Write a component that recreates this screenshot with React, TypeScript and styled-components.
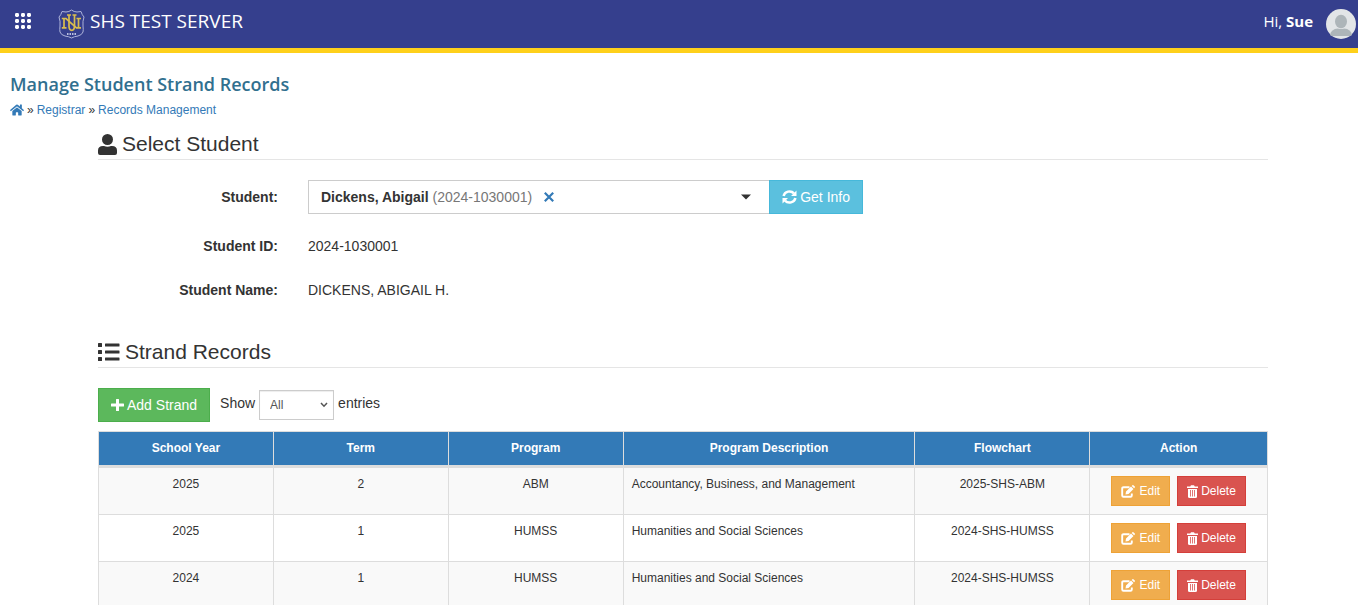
import React from "react";
import styled, { createGlobalStyle } from "styled-components";
import { FaHome } from "react-icons/fa";

const GlobalStyle = createGlobalStyle`
  *, *::before, *::after { box-sizing: border-box; }
  body {
    margin: 0;
    background: #fff;
    color: #333;
    font: 14px/20px "Liberation Sans", Arial, sans-serif;
  }
  button, select { font: inherit; margin: 0; }
  svg { flex: none; }
`;

const TopBar = styled.header`
  display: flex;
  align-items: center;
  height: 53px;
  padding: 0 2px 6px 14px;
  background: #353f8d;
  border-bottom: 5px solid #fed01b;
  color: #fff;
  font-family: "Open Sans", "Noto Sans", sans-serif;
`;

const MenuButton = styled.button`
  display: flex;
  padding: 0;
  border: 0;
  background: none;
  color: inherit;
  cursor: pointer;
`;

const Brand = styled.a`
  display: flex;
  align-items: center;
  gap: 5px;
  margin-left: 26px;
  color: inherit;
  font-size: 19px;
  line-height: 24px;
  text-decoration: none;

  svg { margin-top: 5px; }
`;

const UserMenu = styled.div`
  display: flex;
  align-items: center;
  gap: 13px;
  margin-left: auto;
  font-size: 15px;

  svg { margin-top: 5px; }
`;

const Page = styled.main`
  padding: 18px 2px 24px 10px;
`;

const PageTitle = styled.h1`
  margin: 0;
  color: #31708f;
  font: 600 18px/26px "Open Sans", "Noto Sans", sans-serif;
`;

const Breadcrumb = styled.nav`
  display: flex;
  align-items: center;
  gap: 3px;
  margin-top: 3px;
  font-size: 12px;

  a {
    display: flex;
    color: #337ab7;
    text-decoration: none;
  }
`;

const Container = styled.div`
  max-width: 1170px;
  margin: 0 auto;
`;

const SectionTitle = styled.h2`
  display: flex;
  align-items: center;
  gap: 5px;
  margin: 0 0 20px;
  padding: 10px 0 1px;
  border-bottom: 1px solid #e5e5e5;
  font-size: 21px;
  font-weight: 400;
  line-height: 28px;
`;

const FormRow = styled.div<{ $after: number }>`
  display: grid;
  grid-template-columns: 180px 1fr;
  column-gap: 30px;
  align-items: center;
  margin-bottom: ${(p) => p.$after}px;
`;

const FieldLabel = styled.label`
  font-weight: 700;
  text-align: right;
`;

const InputGroup = styled.div`
  display: flex;
  max-width: 555px;
`;

const StudentPicker = styled.div`
  display: flex;
  flex: 1;
  align-items: center;
  border: 1px solid #ccc;
  border-right: 0;
  padding: 0 18px 0 12px;
`;

const PickerButton = styled.button`
  padding: 0;
  border: 0;
  background: none;
  color: #777;
  cursor: pointer;

  strong { color: #333; }
`;

const IconButton = styled.button<{ $color: string; $push?: boolean }>`
  display: flex;
  margin-left: ${(p) => (p.$push ? "auto" : "12px")};
  padding: 0;
  border: 0;
  background: none;
  color: ${(p) => p.$color};
  cursor: pointer;
`;

const tones = {
  info: ["#5bc0de", "#46b8da"],
  success: ["#5cb85c", "#4cae4c"],
  warning: ["#f0ad4e", "#eea236"],
  danger: ["#d9534f", "#d43f3a"],
};

const Button = styled.button<{ $tone: keyof typeof tones; $small?: boolean }>`
  display: inline-flex;
  align-items: center;
  gap: 3px;
  height: ${(p) => (p.$small ? 30 : 34)}px;
  padding: 0 ${(p) => (p.$small ? 9 : 12)}px;
  border: 1px solid ${(p) => tones[p.$tone][1]};
  background: ${(p) => tones[p.$tone][0]};
  color: #fff;
  font-size: ${(p) => (p.$small ? 12 : 14)}px;
  white-space: nowrap;
  cursor: pointer;
`;

const Toolbar = styled.div`
  display: flex;
  align-items: center;
  gap: 10px;
  margin-bottom: 9px;
`;

const LengthLabel = styled.label`
  display: flex;
  align-items: center;
  gap: 4px;

  span { padding-bottom: 4px; }
`;

const SelectWrap = styled.div`
  position: relative;
  width: 75px;

  svg {
    position: absolute;
    top: 12px;
    right: 6px;
    pointer-events: none;
  }
`;

const LengthSelect = styled.select`
  display: block;
  width: 100%;
  height: 30px;
  padding: 0 10px;
  appearance: none;
  border: 1px solid #ccc;
  border-radius: 0;
  background: #fff;
  box-shadow: inset 0 1px 1px rgba(0, 0, 0, 0.075);
  color: #555;
  font-size: 12px;
`;

const RecordsTable = styled.table`
  width: 100%;
  table-layout: fixed;
  border-collapse: collapse;
  font-size: 12px;
  line-height: 17px;

  th, td {
    border: 1px solid #ddd;
    padding: 8px;
    text-align: center;
    vertical-align: top;
  }
  th {
    border-bottom-width: 3px;
    background: #337ab7;
    color: #fff;
  }
  tbody tr:nth-child(odd) { background: #f9f9f9; }
  td:nth-child(4) { text-align: left; }
`;

const Column = styled.col<{ $share?: string }>`
  width: ${(p) => p.$share ?? "auto"};
`;

const Actions = styled.div`
  display: flex;
  justify-content: center;
  gap: 7px;
`;

const records = [
  ["2025", "2", "ABM", "Accountancy, Business, and Management", "2025-SHS-ABM"],
  ["2025", "1", "HUMSS", "Humanities and Social Sciences", "2024-SHS-HUMSS"],
  ["2024", "1", "HUMSS", "Humanities and Social Sciences", "2024-SHS-HUMSS"],
];

const AppsIcon = () => (
  <svg width="18" height="18" viewBox="0 0 18 18" fill="currentColor" aria-hidden="true">
    {[1, 7, 13].map((y) => [1, 7, 13].map((x) => <rect key={`${x}-${y}`} x={x} y={y} width="4" height="4" rx="1.4" />))}
  </svg>
);

const UserIcon = () => (
  <svg width="19" height="21" viewBox="0 0 19 21" fill="currentColor" aria-hidden="true">
    <circle cx="9.5" cy="5.5" r="5.500" />
    <path d="M0 19V16.500Q0 12 5 12H6Q9.500 13.600 13 12H14Q19 12 19 16.500V19Q19 21 17 21H2Q0 21 0 19Z" />
  </svg>
);

const ListIcon = () => (
  <svg width="22" height="18" viewBox="0 0 22 18" fill="currentColor" aria-hidden="true">
    {[0, 7, 14].map((y) => (
      <g key={y}>
        <rect x="0" y={y} width="4" height="4" rx="0.5" />
        <rect x="7" y={y + 0.5} width="14.500" height="3" rx="0.5" />
      </g>
    ))}
  </svg>
);

const PlusIcon = () => (
  <svg width="13" height="14" viewBox="0 0 13 14" fill="currentColor" aria-hidden="true">
    <path d="M5 1.500Q5 1 5.500 1H7.500Q8 1 8 1.500V5.500H12.500Q13 5.500 13 6V8Q13 8.500 12.500 8.500H8V12.500Q8 13 7.500 13H5.500Q5 13 5 12.500V8.500H0.500Q0 8.500 0 8V6Q0 5.500 0.500 5.500H5Z" />
  </svg>
);

const RefreshIcon = () => (
  <svg width="15" height="14" viewBox="0 0 15 14" aria-hidden="true">
    <path d="M1.600 6A6 5.700 0 0 1 12 3.400M13.400 8A6 5.700 0 0 1 3 10.600" fill="none" stroke="currentColor" strokeWidth="2.500" />
    <path d="M14.500 0.500V6H9ZM0.500 13.500V8H6Z" fill="currentColor" />
  </svg>
);

const EditIcon = () => (
  <svg width="15" height="13" viewBox="0 0 15 13" aria-hidden="true">
    <path d="M8.500 2.200H2.500Q1.200 2.200 1.200 3.500V10.500Q1.200 11.800 2.500 11.800H9.500Q10.800 11.800 10.800 10.500V8.500" fill="none" stroke="currentColor" strokeWidth="1.900" />
    <path d="M4.500 9.500L5 6.500L10 1.500L12.500 4L7.500 9ZM10.700 0.900L11.400 0.200Q11.900 -0.200 12.400 0.200L13.800 1.600Q14.200 2.100 13.800 2.600L13.100 3.300Z" fill="currentColor" />
  </svg>
);

const TrashIcon = () => (
  <svg width="11" height="13" viewBox="0 0 11 13" aria-hidden="true">
    <path d="M0 1.500H3.200L4 0.200H7L7.800 1.500H11V3H0Z" fill="currentColor" />
    <path d="M1 4H10V11.500Q10 13 8.500 13H2.500Q1 13 1 11.500Z" fill="currentColor" />
    <path d="M3.500 5V11.500M5.500 5V11.500M7.500 5V11.500" stroke="#d9534f" strokeWidth="0.800" />
  </svg>
);

const ClearIcon = () => (
  <svg width="10" height="10" viewBox="0 0 10 10" fill="none" stroke="currentColor" strokeWidth="2.200" aria-hidden="true">
    <path d="M0.800 0.800L9.200 9.200M9.200 0.800L0.800 9.200" />
  </svg>
);

const CaretIcon = () => (
  <svg width="10" height="6" viewBox="0 0 10 6" fill="currentColor" aria-hidden="true">
    <path d="M0 0.500H10L5 5.500Z" />
  </svg>
);

const ShieldLogo = () => (
  <svg width="27" height="30" viewBox="0 0 27 30" fill="none" aria-hidden="true">
    <path d="M13.5 1Q16 3 19 3L23 2.500Q24 6 26 8Q24.500 12 25 17Q25.500 21 25 23Q24 26 20 27Q16 27.500 13.500 29Q11 27.500 7 27Q3 26 2 23Q1.500 21 2 17Q2.500 12 1 8Q3 6 4 2.500L8 3Q11 3 13.500 1Z" stroke="#aeb4da" strokeWidth="1" />
    <path d="M3.800 9.500H8L18.500 18.800H20.500V9.500M18.500 9.500H23M6 9.500V18.800M3.800 18.800H8.500M18.500 18.800H23" stroke="#d9bd4e" strokeWidth="1.700" />
    <path d="M9 6H13M11 6V17Q11 21.300 13.800 21.300Q16.500 21.300 16.500 17V6M14.500 6H18.500" stroke="#d9bd4e" strokeWidth="1.700" />
    <path d="M9 25H18" stroke="#b9bfdf" strokeWidth="2" strokeDasharray="1.500 1" />
  </svg>
);

const Avatar = () => (
  <svg width="30" height="30" viewBox="0 0 30 30" aria-hidden="true">
    <circle cx="15" cy="15" r="15" fill="#e2e5e7" />
    <path d="M4 26Q5 20 12 19.500H18Q25 20 26 26Q25 27 24 27H6Q5 27 4 26Z" fill="#adb5b9" />
    <ellipse cx="15" cy="12.500" rx="6.800" ry="7.500" fill="#e2e5e7" />
    <ellipse cx="15" cy="12.500" rx="6" ry="6.700" fill="#adb5b9" />
  </svg>
);

export default function App() {
  return (
    <>
      <GlobalStyle />
      <TopBar>
        <MenuButton aria-label="Applications"><AppsIcon /></MenuButton>
        <Brand href="#"><ShieldLogo />SHS TEST SERVER</Brand>
        <UserMenu><span>Hi, <strong>Sue</strong></span><Avatar /></UserMenu>
      </TopBar>
      <Page>
        <PageTitle>Manage Student Strand Records</PageTitle>
        <Breadcrumb aria-label="Breadcrumb">
          <a href="#" aria-label="Home"><FaHome size={14} /></a>
          <span>»</span><a href="#">Registrar</a>
          <span>»</span><a href="#">Records Management</a>
        </Breadcrumb>
        <Container>
          <SectionTitle><UserIcon />Select Student</SectionTitle>
          <FormRow $after={22}>
            <FieldLabel htmlFor="student">Student:</FieldLabel>
            <InputGroup>
              <StudentPicker>
                <PickerButton id="student"><strong>Dickens, Abigail</strong> (2024-1030001)</PickerButton>
                <IconButton $color="#337ab7" aria-label="Clear student"><ClearIcon /></IconButton>
                <IconButton $color="#333" $push aria-label="Show students"><CaretIcon /></IconButton>
              </StudentPicker>
              <Button $tone="info"><RefreshIcon />Get Info</Button>
            </InputGroup>
          </FormRow>
          <FormRow $after={24}>
            <FieldLabel as="span">Student ID:</FieldLabel>
            <span>2024-1030001</span>
          </FormRow>
          <FormRow $after={28}>
            <FieldLabel as="span">Student Name:</FieldLabel>
            <span>DICKENS, ABIGAIL H.</span>
          </FormRow>
          <SectionTitle><ListIcon />Strand Records</SectionTitle>
          <Toolbar>
            <Button $tone="success"><PlusIcon />Add Strand</Button>
            <LengthLabel>
              <span>Show</span>
              <SelectWrap>
                <LengthSelect defaultValue="All">
                  <option>10</option>
                  <option>25</option>
                  <option>All</option>
                </LengthSelect>
                <svg width="8" height="6" viewBox="0 0 8 6" fill="none" stroke="#555" strokeWidth="1.500" aria-hidden="true"><path d="M1 1L4 4.200L7 1" /></svg>
              </SelectWrap>
              <span>entries</span>
            </LengthLabel>
          </Toolbar>
          <RecordsTable>
            <colgroup>
              <Column $share="14.96%" /><Column $share="14.96%" /><Column $share="14.96%" />
              <Column $share="24.96%" /><Column $share="14.96%" /><Column />
            </colgroup>
            <thead>
              <tr>
                {["School Year", "Term", "Program", "Program Description", "Flowchart", "Action"].map((h) => <th key={h} scope="col">{h}</th>)}
              </tr>
            </thead>
            <tbody>
              {records.map((cells, i) => (
                <tr key={i}>
                  {cells.map((c, j) => <td key={j}>{c}</td>)}
                  <td>
                    <Actions>
                      <Button $tone="warning" $small><EditIcon />Edit</Button>
                      <Button $tone="danger" $small><TrashIcon />Delete</Button>
                    </Actions>
                  </td>
                </tr>
              ))}
            </tbody>
          </RecordsTable>
        </Container>
      </Page>
    </>
  );
}
